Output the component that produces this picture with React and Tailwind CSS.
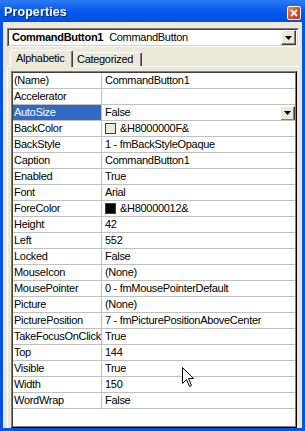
import React from 'react';

// VBA property sheet, XP look
const rows = [
  ['(Name)', 'CommandButton1'],
  ['Accelerator', ''],
  ['AutoSize', 'False', { selected: true }],
  ['BackColor', '&H8000000F&', { swatch: 'bg-[#ECE9D8]' }],
  ['BackStyle', '1 - fmBackStyleOpaque'],
  ['Caption', 'CommandButton1'],
  ['Enabled', 'True'],
  ['Font', 'Arial'],
  ['ForeColor', '&H80000012&', { swatch: 'bg-black' }],
  ['Height', '42'],
  ['Left', '552'],
  ['Locked', 'False'],
  ['MouseIcon', '(None)'],
  ['MousePointer', '0 - fmMousePointerDefault'],
  ['Picture', '(None)'],
  ['PicturePosition', '7 - fmPicturePositionAboveCenter'],
  ['TakeFocusOnClick', 'True'],
  ['Top', '144'],
  ['Visible', 'True'],
  ['Width', '150'],
  ['WordWrap', 'False'],
];

function DropButton({ className = '' }) {
  return (
    <div
      className={`flex items-center justify-center bg-[#ECE9D8] border border-t-white border-l-white border-r-[#404040] border-b-[#404040] shadow-[inset_-1px_-1px_0_#808080] ${className}`}
    >
      <svg width="7" height="4" viewBox="0 0 7 4">
        <path d="M0 0h7L3.5 4z" fill="#000" />
      </svg>
    </div>
  );
}

function PropertyRow({ name, value, opts = {} }) {
  return (
    <div className="flex h-[16px] border-b border-[#C0C0C0]">
      <div
        className={`w-[89px] shrink-0 pl-[1px] leading-[15px] whitespace-nowrap overflow-hidden border-r border-[#C0C0C0] ${
          opts.selected ? 'bg-[#316AC5] text-white' : 'text-black'
        }`}
      >
        {name}
      </div>
      <div className="flex-1 flex items-center pl-[3px] leading-[15px] whitespace-nowrap overflow-hidden">
        {opts.swatch && (
          <span className={`w-[11px] h-[11px] border border-[#404040] mr-[4px] shrink-0 ${opts.swatch}`} />
        )}
        <span className="flex-1">{value}</span>
        {opts.selected && <DropButton className="w-[15px] h-[15px] -mb-[1px]" />}
      </div>
    </div>
  );
}

export default function App() {
  return (
    <div
      className="relative w-[305px] h-[431px] bg-[#0553E2] flex flex-col overflow-hidden text-[11px] tracking-[-0.3px] select-none"
      style={{ fontFamily: '"Liberation Sans", Arial, sans-serif' }}
    >
      {/* Title bar */}
      <div className="h-[22px] shrink-0 flex items-center justify-between pl-[4px] pr-[4px] bg-gradient-to-b from-[#2C7BF5] via-[#0758EC] to-[#0250E0]">
        <span className="text-white font-bold text-[12.5px] tracking-[0.1px] mt-[3px] drop-shadow-[1px_1px_0_#0A2A8A]">
          Properties
        </span>
        <div className="w-[14px] h-[14px] mt-[3px] rounded-[2px] border border-white bg-gradient-to-br from-[#F08A62] via-[#E2461F] to-[#C93A14] flex items-center justify-center">
          <svg width="8" height="8" viewBox="0 0 8 8">
            <path d="M1 1L7 7M7 1L1 7" stroke="#fff" strokeWidth="1.8" />
          </svg>
        </div>
      </div>

      {/* Body */}
      <div className="flex-1 mx-[3px] mb-[3px] bg-[#ECE9D8] flex flex-col pt-[6px] pl-[4px] pr-[3px]">
        {/* Object combo */}
        <div className="h-[19px] shrink-0 flex border border-t-[#808080] border-l-[#808080] border-r-white border-b-white">
          <div className="flex-1 flex items-center bg-white border border-t-[#404040] border-l-[#404040] border-r-[#D4D0C8] border-b-[#D4D0C8] pr-[1px]">
            <span className="pl-[3px] font-bold text-black">CommandButton1</span>
            <span className="pl-[6px] flex-1 text-black">CommandButton</span>
            <DropButton className="w-[15px] h-[15px]" />
          </div>
        </div>

        {/* Tabs */}
        <div className="flex items-end h-[17px] mt-[3px] shrink-0 relative z-10">
          <div className="ml-[3px] w-[63px] h-[17px] bg-[#ECE9D8] border-t border-l border-r border-t-white border-l-white border-r-[#404040] rounded-t-[2px] shadow-[inset_-1px_0_0_#808080] pl-[5px] leading-[15px] text-black">
            Alphabetic
          </div>
          <div className="w-[69px] h-[14px] mb-[1px] bg-[#ECE9D8] border-t border-r border-t-white border-r-[#404040] rounded-tr-[2px] shadow-[inset_-1px_0_0_#808080] pl-[4px] leading-[13px] text-black">
            Categorized
          </div>
        </div>

        {/* Tab page */}
        <div className="flex-1 -mt-[1px] border-t border-l border-t-white border-l-white pt-[4px] pl-[3px] pr-[2px] flex flex-col">
          <div className="flex-1 flex flex-col border border-t-[#808080] border-l-[#808080] border-r-black border-b-black">
            <div className="flex-1 bg-white border border-t-[#404040] border-l-[#404040] border-r-[#808080] border-b-[#808080] overflow-hidden">
              {rows.map(([name, value, opts]) => (
                <PropertyRow key={name} name={name} value={value} opts={opts} />
              ))}
            </div>
          </div>
        </div>
      </div>

      {/* Mouse pointer over the grid */}
      <svg className="absolute left-[182px] top-[367px]" width="13" height="21" viewBox="0 0 13 21">
        <path
          d="M0.5 0.5V16.5L4.5 12.5L7.5 19.5L9.5 18.5L6.5 11.5H11.5Z"
          fill="#fff"
          stroke="#000"
          strokeWidth="1"
        />
      </svg>
    </div>
  );
}
